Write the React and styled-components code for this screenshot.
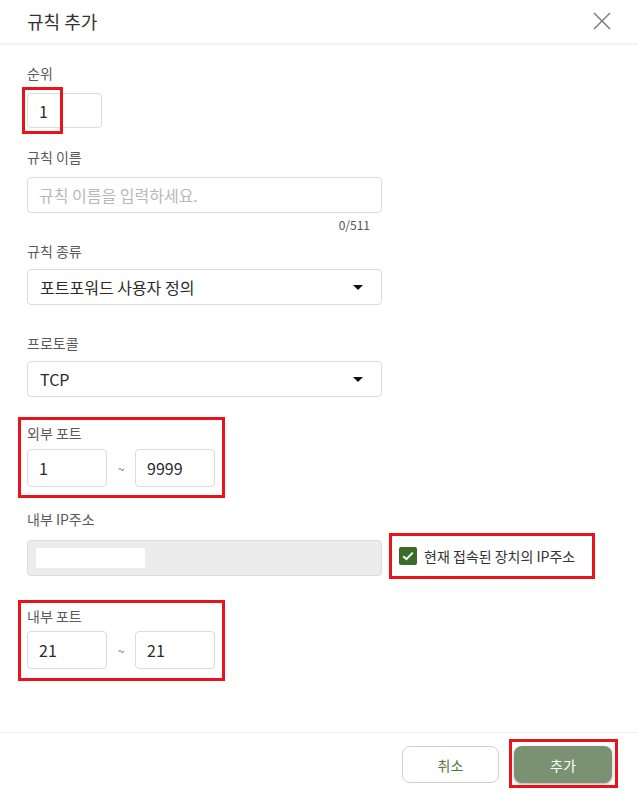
import React from "react";
import styled, { createGlobalStyle } from "styled-components";

const GlobalStyle = createGlobalStyle`
  html, body {
    margin: 0;
    padding: 0;
    background: #fff;
  }
  body {
    font-family: "Noto Sans CJK KR", "Noto Sans", sans-serif;
    color: #333;
  }
  * { box-sizing: border-box; }
`;

/**
 * Port forwarding "add rule" dialog
 **/
export default function App() {
    return (
        <>
            <GlobalStyle />
            <Dialog>
                <Header>
                    <Title>규칙 추가</Title>
                    <CloseButton aria-label="닫기">
                        <svg width="18" height="18" viewBox="0 0 18 18">
                            <path d="M1 1 L17 17 M17 1 L1 17" stroke="#777" strokeWidth="1.4" fill="none" />
                        </svg>
                    </CloseButton>
                </Header>

                <Body>
                    <Field $top={18}>
                        <Label>순위</Label>
                        <Marked>
                            <Input $width={75} $height={35} defaultValue="1" />
                            <MarkOverlay />
                        </Marked>
                    </Field>

                    <Field $top={19}>
                        <Label>규칙 이름</Label>
                        <Input $width={355} placeholder="규칙 이름을 입력하세요." />
                        <Counter>0/511</Counter>
                    </Field>

                    <Field $top={8} $gap={8}>
                        <Label>규칙 종류</Label>
                        <Select>
                            포트포워드 사용자 정의
                            <Caret />
                        </Select>
                    </Field>

                    <Field $top={28} $gap={8}>
                        <Label>프로토콜</Label>
                        <Select>
                            TCP
                            <Caret />
                        </Select>
                    </Field>

                    <Highlight $top={20} $padBottom={8}>
                        <Label>외부 포트</Label>
                        <RangeRow $top={6}>
                            <Input $width={80} $height={38} defaultValue="1" />
                            <Tilde>~</Tilde>
                            <Input $width={80} $height={38} defaultValue="9999" />
                        </RangeRow>
                    </Highlight>

                    <Field $top={11} $gap={8}>
                        <Label>내부 IP주소</Label>
                        <IpRow>
                            <DisabledInput>
                                <Masked />
                            </DisabledInput>
                            <CheckOption>
                                <CheckBox>
                                    <svg width="12" height="10" viewBox="0 0 12 10">
                                        <path d="M1.2 5.2 L4.4 8.2 L10.8 1.6" stroke="#fff" strokeWidth="2" fill="none" />
                                    </svg>
                                </CheckBox>
                                현재 접속된 장치의 IP주소
                            </CheckOption>
                        </IpRow>
                    </Field>

                    <Highlight $top={21} $padBottom={9}>
                        <Label>내부 포트</Label>
                        <RangeRow $top={5}>
                            <Input $width={80} $height={38} defaultValue="21" />
                            <Tilde>~</Tilde>
                            <Input $width={80} $height={38} defaultValue="21" />
                        </RangeRow>
                    </Highlight>
                </Body>

                <Footer>
                    <CancelButton>취소</CancelButton>
                    <AddWrap>
                        <AddButton>추가</AddButton>
                    </AddWrap>
                </Footer>
            </Dialog>
        </>
    );
}

const Dialog = styled.div`
  display: flex;
  flex-direction: column;
  width: 638px;
  height: 792px;
  background: #fff;
`;

const Header = styled.header`
  display: flex;
  align-items: center;
  justify-content: space-between;
  height: 45px;
  padding: 0 27px 2px 27px;
  border-bottom: 2px solid #f3f3f3;
`;

const Title = styled.h1`
  margin: 0;
  font-size: 18px;
  font-weight: 400;
  color: #333;
  line-height: 24px;
`;

const CloseButton = styled.button`
  display: flex;
  align-items: center;
  justify-content: center;
  width: 24px;
  height: 24px;
  margin-right: -3px;
  padding: 0;
  border: none;
  background: none;
`;

const Body = styled.main`
  flex: 1;
  display: flex;
  flex-direction: column;
  align-items: flex-start;
  padding-left: 27px;
`;

const Field = styled.section`
  display: flex;
  flex-direction: column;
  align-items: flex-start;
  gap: ${(p) => p.$gap ?? 10}px;
  margin-top: ${(p) => p.$top}px;
`;

const Label = styled.label`
  font-size: 14px;
  line-height: 20px;
  color: #5a5a5a;
`;

const Input = styled.input`
  width: ${(p) => p.$width}px;
  height: ${(p) => p.$height ?? 36}px;
  padding: 0 11px;
  border: 1px solid #dcdcdc;
  border-radius: 4px;
  font-family: inherit;
  font-size: 16px;
  color: #2a2a2a;
  outline: none;

  &::placeholder {
    color: #b8b8b8;
  }
`;

const Marked = styled.div`
  position: relative;
`;

const MarkOverlay = styled.span`
  position: absolute;
  left: -5px;
  top: -6px;
  width: 41px;
  height: 47px;
  border: 3px solid #e8141c;
  pointer-events: none;
`;

const Counter = styled.span`
  align-self: flex-end;
  margin-top: -6px;
  margin-right: 12px;
  font-size: 12px;
  line-height: 16px;
  color: #555;
`;

const Select = styled.div`
  display: flex;
  align-items: center;
  justify-content: space-between;
  width: 355px;
  height: 36px;
  padding: 0 18px 0 12px;
  border: 1px solid #dcdcdc;
  border-radius: 4px;
  font-size: 16px;
  color: #2a2a2a;
`;

const Caret = styled.span`
  width: 0;
  height: 0;
  border-left: 5px solid transparent;
  border-right: 5px solid transparent;
  border-top: 5px solid #111;
`;

const Highlight = styled.section`
  display: flex;
  flex-direction: column;
  align-items: flex-start;
  margin-top: ${(p) => p.$top}px;
  margin-left: -9px;
  padding: 3px 7px ${(p) => p.$padBottom}px 6px;
  border: 3px solid #e8141c;
`;

const RangeRow = styled.div`
  display: flex;
  align-items: center;
  margin-top: ${(p) => p.$top}px;
`;

const Tilde = styled.span`
  width: 28px;
  text-align: center;
  font-size: 12px;
  color: #666;
`;

const IpRow = styled.div`
  display: flex;
  align-items: center;
  gap: 7px;
`;

const DisabledInput = styled.div`
  display: flex;
  align-items: center;
  width: 355px;
  height: 36px;
  padding: 0 8px;
  background: #ececec;
  border: 1px solid #dcdcdc;
  border-radius: 4px;
`;

const Masked = styled.span`
  width: 109px;
  height: 20px;
  background: #fff;
`;

const CheckOption = styled.label`
  display: flex;
  align-items: center;
  gap: 7px;
  height: 46px;
  padding: 0 17px 0 7px;
  border: 3px solid #e8141c;
  font-size: 14px;
  color: #333;
  margin-top: -4px;
`;

const CheckBox = styled.span`
  display: flex;
  align-items: center;
  justify-content: center;
  width: 18px;
  height: 18px;
  border-radius: 2px;
  background: #3b6b28;
`;

const Footer = styled.footer`
  display: flex;
  justify-content: flex-end;
  align-items: flex-start;
  gap: 10px;
  height: 60px;
  padding: 6px 20px 0 0;
  border-top: 1px solid #f0f0f0;
`;

const CancelButton = styled.button`
  width: 97px;
  height: 37px;
  margin-top: 7px;
  border: 1px solid #d0d0d0;
  border-radius: 8px;
  background: #fff;
  font-family: inherit;
  font-size: 14px;
  color: #4d7a3c;
`;

const AddWrap = styled.div`
  padding: 4px 3px 2px 2px;
  border: 3px solid #e8141c;
`;

const AddButton = styled.button`
  display: block;
  width: 98px;
  height: 37px;
  border: none;
  border-radius: 8px;
  background: #7a9271;
  box-shadow: 0 1px 3px rgba(0, 0, 0, 0.35);
  font-family: inherit;
  font-size: 14px;
  color: #fff;
`;
